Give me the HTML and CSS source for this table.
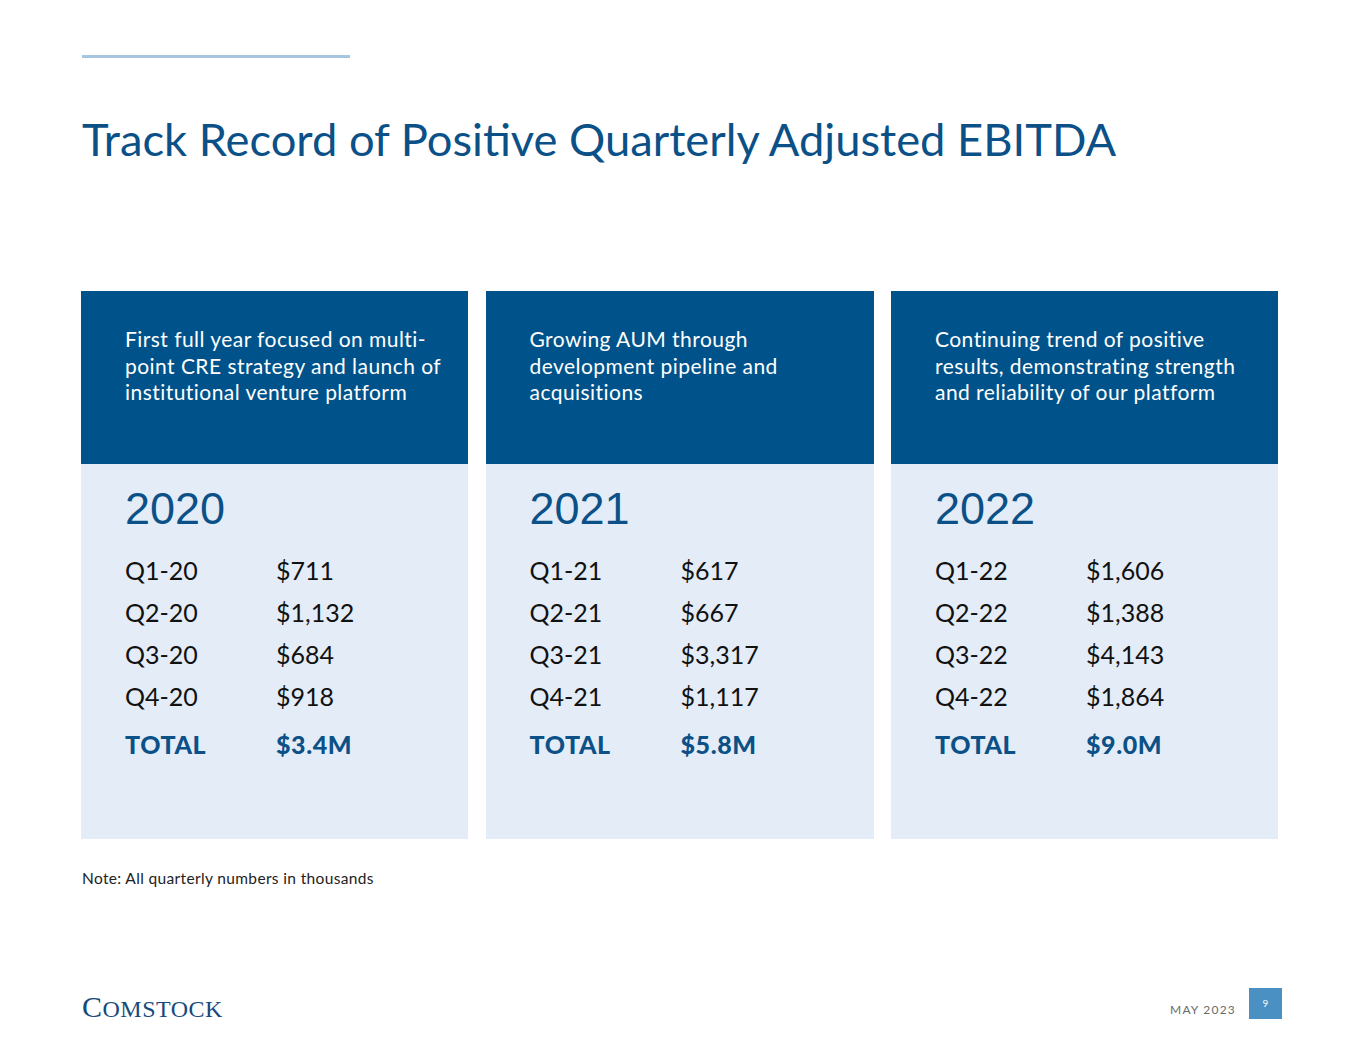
FILE: index.html
```html
<!DOCTYPE html>
<html lang="en">
<head>
<meta charset="utf-8">
<title>Track Record of Positive Quarterly Adjusted EBITDA</title>
<link rel="stylesheet" href="styles.css">
</head>
<body>
<div class="page">
  <div class="rule"></div>
  <h1 class="title">Track Record of Positive Quarterly Adjusted EBITDA</h1>

  <div class="cards">
    <section class="card">
      <div class="card-head">First full year focused on multi-point CRE strategy and launch of institutional venture platform</div>
      <div class="card-body">
        <div class="year">2020</div>
        <div class="row"><span class="q">Q1-20</span><span class="v">$711</span></div>
        <div class="row"><span class="q">Q2-20</span><span class="v">$1,132</span></div>
        <div class="row"><span class="q">Q3-20</span><span class="v">$684</span></div>
        <div class="row"><span class="q">Q4-20</span><span class="v">$918</span></div>
        <div class="row total"><span class="q">TOTAL</span><span class="v">$3.4M</span></div>
      </div>
    </section>
    <section class="card">
      <div class="card-head">Growing AUM through development pipeline and acquisitions</div>
      <div class="card-body">
        <div class="year">2021</div>
        <div class="row"><span class="q">Q1-21</span><span class="v">$617</span></div>
        <div class="row"><span class="q">Q2-21</span><span class="v">$667</span></div>
        <div class="row"><span class="q">Q3-21</span><span class="v">$3,317</span></div>
        <div class="row"><span class="q">Q4-21</span><span class="v">$1,117</span></div>
        <div class="row total"><span class="q">TOTAL</span><span class="v">$5.8M</span></div>
      </div>
    </section>
    <section class="card">
      <div class="card-head">Continuing trend of positive results, demonstrating strength and reliability of our platform</div>
      <div class="card-body">
        <div class="year">2022</div>
        <div class="row"><span class="q">Q1-22</span><span class="v">$1,606</span></div>
        <div class="row"><span class="q">Q2-22</span><span class="v">$1,388</span></div>
        <div class="row"><span class="q">Q3-22</span><span class="v">$4,143</span></div>
        <div class="row"><span class="q">Q4-22</span><span class="v">$1,864</span></div>
        <div class="row total"><span class="q">TOTAL</span><span class="v">$9.0M</span></div>
      </div>
    </section>
  </div>

  <p class="note">Note: All quarterly numbers in thousands</p>

  <footer class="footer">
    <div class="logo"><span class="logo-big">C</span>OMSTOCK</div>
    <div class="footer-right">
      <span class="date">MAY 2023</span>
      <span class="pagenum">9</span>
    </div>
  </footer>
</div>
</body>
</html>
```

FILE: styles.css
```css
* { box-sizing: border-box; }

html, body {
  margin: 0;
  padding: 0;
  background: #ffffff;
}

.page {
  width: 1365px;
  height: 1055px;
  padding: 55px 83px 0 82px;
  font-family: "Lato", "Open Sans", sans-serif;
  color: #111111;
  overflow: hidden;
}

.rule {
  width: 268px;
  height: 3px;
  background: #a7c5df;
}

.title {
  margin: 53px 0 0 0;
  font-size: 45.3px;
  line-height: 56px;
  font-weight: 400;
  color: #0b5188;
  letter-spacing: 0;
}

.cards {
  margin: 124px 0 0 -1px;
  display: grid;
  grid-template-columns: 387px 388px 387px;
  column-gap: 17.5px;
}

.card {
  height: 548px;
  background: #e4ecf7;
  display: flex;
  flex-direction: column;
}

.card-head {
  height: 173px;
  flex: none;
  background: #00538a;
  color: #ffffff;
  padding: 35px 20px 0 44px;
  font-size: 21px;
  line-height: 26.5px;
  letter-spacing: 0.45px;
}

.card-body {
  padding: 19px 0 0 44px;
}

.year {
  font-family: "Liberation Sans", Arial, sans-serif;
  font-size: 45px;
  line-height: 52px;
  color: #0b5188;
  margin-bottom: 14px;
}

.row {
  display: flex;
  font-size: 25px;
  line-height: 42px;
  color: #111111;
}

.row .q {
  width: 151px;
  flex: none;
}

.row.total {
  margin-top: 6px;
  font-weight: 900;
  letter-spacing: 0.6px;
  color: #0b5188;
}

.note {
  margin: 30px 0 0 0;
  font-size: 15.5px;
  line-height: 18px;
  letter-spacing: 0.35px;
  color: #222222;
}

.footer {
  margin-top: 101px;
  display: flex;
  justify-content: space-between;
  align-items: flex-start;
}

.logo {
  margin-top: 4px;
  font-family: "Liberation Serif", "Times New Roman", serif;
  font-size: 24px;
  line-height: 30px;
  color: #174a7c;
  letter-spacing: 0.5px;
}

.logo-big {
  font-size: 30px;
}

.footer-right {
  display: flex;
  align-items: flex-start;
  gap: 13px;
}

.date {
  margin-top: 14px;
  font-size: 12px;
  line-height: 16px;
  letter-spacing: 1.2px;
  color: #6b6b6b;
}

.pagenum {
  width: 33px;
  height: 31px;
  background: #4b90c2;
  color: #ffffff;
  font-size: 10px;
  line-height: 10px;
  text-align: center;
  padding-top: 10px;
}
```
